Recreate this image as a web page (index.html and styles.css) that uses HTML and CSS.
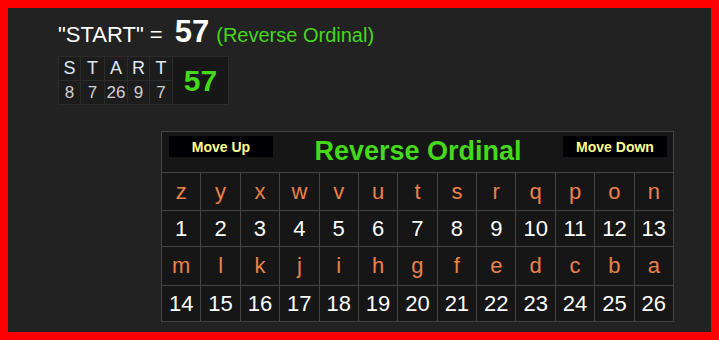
FILE: index.html
```html
<!DOCTYPE html>
<html>
<head>
<meta charset="utf-8">
<link rel="stylesheet" href="styles.css">
</head>
<body>
<div class="page">
  <div class="title">"START" = <b class="sum">57</b><span class="cipher">(Reverse Ordinal)</span></div>
  <div class="mini">
    <div class="ml">S</div><div class="ml">T</div><div class="ml">A</div><div class="ml">R</div><div class="ml">T</div>
    <div class="mtotal">57</div>
    <div class="mn">8</div><div class="mn">7</div><div class="mn">26</div><div class="mn">9</div><div class="mn">7</div>
  </div>
  <div class="chart">
    <div class="chart-head">
      <div class="btn">Move Up</div>
      <div class="chart-title">Reverse Ordinal</div>
      <div class="btn">Move Down</div>
    </div>
    <div class="grid">
      <div class="l">z</div><div class="l">y</div><div class="l">x</div><div class="l">w</div><div class="l">v</div><div class="l">u</div><div class="l">t</div><div class="l">s</div><div class="l">r</div><div class="l">q</div><div class="l">p</div><div class="l">o</div><div class="l">n</div>
      <div class="n">1</div><div class="n">2</div><div class="n">3</div><div class="n">4</div><div class="n">5</div><div class="n">6</div><div class="n">7</div><div class="n">8</div><div class="n">9</div><div class="n">10</div><div class="n">11</div><div class="n">12</div><div class="n">13</div>
      <div class="l">m</div><div class="l">l</div><div class="l">k</div><div class="l">j</div><div class="l">i</div><div class="l">h</div><div class="l">g</div><div class="l">f</div><div class="l">e</div><div class="l">d</div><div class="l">c</div><div class="l">b</div><div class="l">a</div>
      <div class="n">14</div><div class="n">15</div><div class="n">16</div><div class="n">17</div><div class="n">18</div><div class="n">19</div><div class="n">20</div><div class="n">21</div><div class="n">22</div><div class="n">23</div><div class="n">24</div><div class="n">25</div><div class="n">26</div>
    </div>
  </div>
</div>
</body>
</html>
```
FILE: styles.css
```css
html, body {
  margin: 0;
  padding: 0;
}
body {
  width: 719px;
  height: 340px;
  box-sizing: border-box;
  border: 8px solid #ff0000;
  background: #222222;
  font-family: "Liberation Sans", Arial, sans-serif;
  color: #ffffff;
  overflow: hidden;
}
.page {
  padding: 12px 0 0 50px;
}
.title {
  font-size: 22px;
  line-height: 30px;
  height: 30px;
  color: #ffffff;
  white-space: nowrap;
}
.sum {
  font-size: 31px;
  line-height: 20px;
  font-weight: bold;
  margin-left: 6px;
}
.cipher {
  font-size: 20px;
  color: #46d81b;
  margin-left: 7px;
}
.mini {
  margin-top: 6px;
  display: grid;
  grid-template-columns: 21px 23px 22px 21px 22px 55px;
  grid-template-rows: 23px 23px;
  gap: 1px;
  padding: 1px;
  width: max-content;
  background: #2b2b2b;
}
.ml, .mn {
  background: #1c1c1c;
  display: flex;
  align-items: center;
  justify-content: center;
}
.ml {
  font-size: 18px;
  color: #dfe8f2;
}
.mn {
  font-size: 17px;
  color: #d0d0d0;
}
.mtotal {
  grid-column: 6;
  grid-row: 1 / span 2;
  background: #171717;
  color: #46d81b;
  font-size: 30px;
  font-weight: bold;
  display: flex;
  align-items: center;
  justify-content: center;
}
.chart {
  margin: 26px 0 0 103px;
  width: 513px;
  box-sizing: border-box;
  border: 1px solid #444444;
  background: #161616;
}
.chart-head {
  height: 41px;
  box-sizing: border-box;
  padding: 4px 6px 0 7px;
  display: flex;
  align-items: flex-start;
  justify-content: space-between;
  border-bottom: 1px solid #444444;
}
.btn {
  width: 104px;
  height: 21px;
  background: #000004;
  color: #ffff8c;
  font-size: 14px;
  font-weight: bold;
  display: flex;
  align-items: center;
  justify-content: center;
}
.chart-title {
  font-size: 27px;
  line-height: 31px;
  font-weight: bold;
  color: #46d81b;
}
.grid {
  display: grid;
  grid-template-columns: repeat(13, 1fr);
  grid-template-rows: 37px 35px 38px 35px;
  gap: 1px;
  background: #444444;
}
.l, .n {
  background: #161616;
  display: flex;
  align-items: center;
  justify-content: center;
  font-size: 22px;
}
.l {
  color: #ec8149;
}
.n {
  color: #ffffff;
}
```
